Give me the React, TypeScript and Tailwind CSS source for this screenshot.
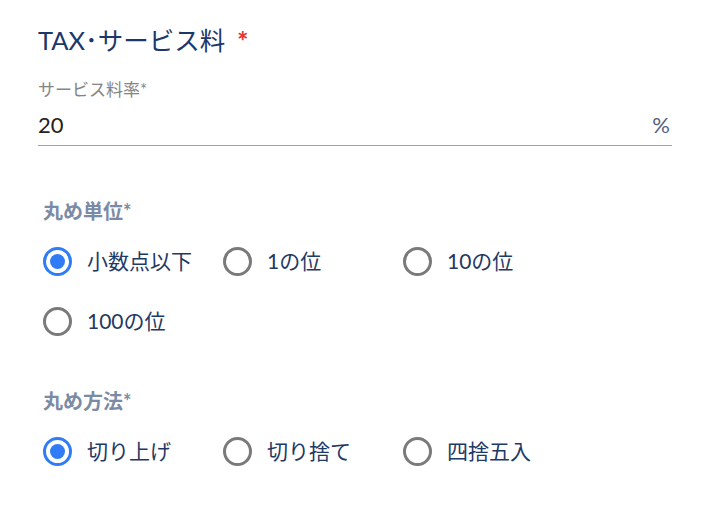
import { useState } from "react";

const font = {
  fontFamily: '"Lato", "Noto Sans CJK JP", sans-serif',
};

type Option = { value: string; label: string };

const Radio = ({
  option,
  checked,
  onSelect,
}: {
  option: Option;
  checked: boolean;
  onSelect: () => void;
}) => (
  <label
    className="flex items-center gap-[15px] w-[180px] h-[60px] cursor-pointer"
    onClick={onSelect}
  >
    <span
      className={
        checked
          ? "flex items-center justify-center w-[29px] h-[29px] rounded-full border-[3px] border-[#2f7cf6]"
          : "flex items-center justify-center w-[29px] h-[29px] rounded-full border-[3px] border-[#7a7a7a]"
      }
    >
      {checked && <span className="w-[15px] h-[15px] rounded-full bg-[#2f7cf6]" />}
    </span>
    <span className="text-[21px] text-[#1f3966] leading-[28px]">{option.label}</span>
  </label>
);

const RadioGroup = ({
  title,
  options,
  value,
  onChange,
}: {
  title: string;
  options: Option[];
  value: string;
  onChange: (v: string) => void;
}) => (
  <div className="flex flex-col">
    <div className="text-[20px] font-bold text-[#7b8aa5] leading-[24px] pl-[5px]">
      {title}*
    </div>
    <div className="flex flex-wrap pl-[5px] mt-[8px]">
      {options.map((o) => (
        <Radio
          key={o.value}
          option={o}
          checked={value === o.value}
          onSelect={() => onChange(o.value)}
        />
      ))}
    </div>
  </div>
);

const unitOptions: Option[] = [
  { value: "decimal", label: "小数点以下" },
  { value: "1", label: "1の位" },
  { value: "10", label: "10の位" },
  { value: "100", label: "100の位" },
];

const methodOptions: Option[] = [
  { value: "up", label: "切り上げ" },
  { value: "down", label: "切り捨て" },
  { value: "round", label: "四捨五入" },
];

export default function App() {
  const [unit, setUnit] = useState("decimal");
  const [method, setMethod] = useState("up");

  return (
    <div className="w-[726px] h-[514px] bg-white px-[38px] pt-[24px]" style={font}>
      <h2 className="h-[32px] text-[25.5px] text-[#1c3769] leading-[32px] flex items-start">
        TAX･サービス料
        <span className="text-[#e53935] text-[26px] leading-[30px] ml-[12px] mt-[2px] font-black">*</span>
      </h2>

      <div className="mt-[24px] w-[634px]">
        <div className="text-[17px] text-[#858585] leading-[20px]">サービス料率*</div>
        <div className="flex items-end justify-between border-b border-[#a3a3a3] pb-[6px] mt-[11px]">
          <span className="text-[22px] text-[#222] leading-[28px]">20</span>
          <span className="text-[22px] text-[#53627f] leading-[28px] pr-[2px]">%</span>
        </div>
      </div>

      <div className="mt-[53px]">
        <RadioGroup title="丸め単位" options={unitOptions} value={unit} onChange={setUnit} />
      </div>

      <div className="mt-[38px]">
        <RadioGroup title="丸め方法" options={methodOptions} value={method} onChange={setMethod} />
      </div>
    </div>
  );
}
